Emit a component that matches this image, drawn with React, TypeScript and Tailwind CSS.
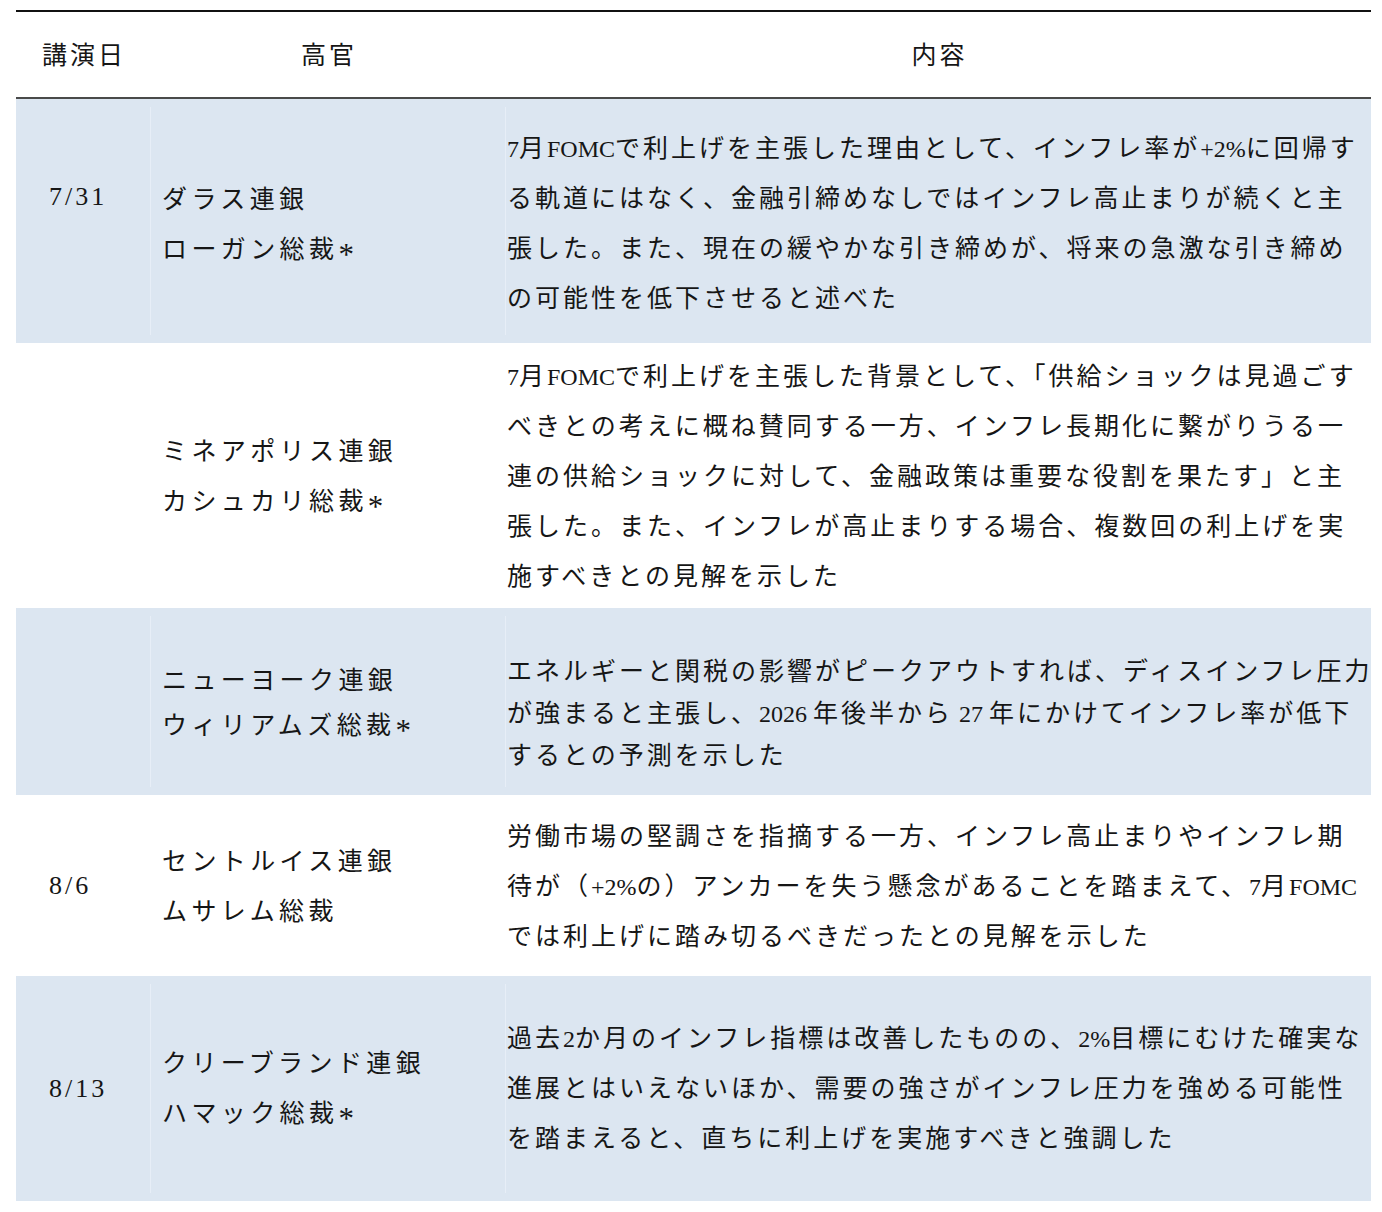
import React from "react";

function T({ s }: { s: string }) {
  const parts = s.split(/([\x20-\x7E]+)/);
  return (
    <>
      {parts.map((p, i) => {
        if (p === "") return null;
        if (p === "*")
          return (
            <span key={i} className="relative top-[7px] text-[31px] leading-none tracking-normal">
              *
            </span>
          );
        if (/^[\x20-\x7E]+$/.test(p))
          return (
            <span key={i} className="text-[24px] tracking-normal">
              {p}
            </span>
          );
        return <React.Fragment key={i}>{p}</React.Fragment>;
      })}
    </>
  );
}

type RowData = {
  date?: string;
  dateTop?: boolean;
  name: string[];
  content: string[];
  rowClass: string;
  lineClass: string;
  nameClass: string;
  contentClass: string;
};

const rows: RowData[] = [
  {
    date: "7/31",
    dateTop: true,
    name: ["ダラス連銀", "ローガン総裁*"],
    content: [
      "7月FOMCで利上げを主張した理由として、インフレ率が+2%に回帰す",
      "る軌道にはなく、金融引締めなしではインフレ高止まりが続くと主",
      "張した。また、現在の緩やかな引き締めが、将来の急激な引き締め",
      "の可能性を低下させると述べた",
    ],
    rowClass: "h-[244px] bg-[#dce6f1]",
    lineClass: "border-[#e7eef7]",
    nameClass: "leading-[50px] pt-[8px]",
    contentClass: "leading-[50px] pt-[6px]",
  },
  {
    name: ["ミネアポリス連銀", "カシュカリ総裁*"],
    content: [
      "7月FOMCで利上げを主張した背景として、「供給ショックは見過ごす",
      "べきとの考えに概ね賛同する一方、インフレ長期化に繋がりうる一",
      "連の供給ショックに対して、金融政策は重要な役割を果たす」と主",
      "張した。また、インフレが高止まりする場合、複数回の利上げを実",
      "施すべきとの見解を示した",
    ],
    rowClass: "h-[265px] bg-white",
    lineClass: "border-transparent",
    nameClass: "leading-[50px] pt-[3px]",
    contentClass: "leading-[50px] pt-[3px]",
  },
  {
    name: ["ニューヨーク連銀", "ウィリアムズ総裁*"],
    content: [
      "エネルギーと関税の影響がピークアウトすれば、ディスインフレ圧力",
      "が強まると主張し、2026 年後半から 27 年にかけてインフレ率が低下",
      "するとの予測を示した",
    ],
    rowClass: "h-[187px] bg-[#dce6f1]",
    lineClass: "border-[#e7eef7]",
    nameClass: "leading-[45px] pt-[2px]",
    contentClass: "leading-[42px] pt-[25px]",
  },
  {
    date: "8/6",
    name: ["セントルイス連銀", "ムサレム総裁"],
    content: [
      "労働市場の堅調さを指摘する一方、インフレ高止まりやインフレ期",
      "待が（+2%の）アンカーを失う懸念があることを踏まえて、7月FOMC",
      "では利上げに踏み切るべきだったとの見解を示した",
    ],
    rowClass: "h-[181px] bg-white",
    lineClass: "border-transparent",
    nameClass: "leading-[50px] pt-[2px]",
    contentClass: "leading-[50px] pt-[2px]",
  },
  {
    date: "8/13",
    name: ["クリーブランド連銀", "ハマック総裁*"],
    content: [
      "過去2か月のインフレ指標は改善したものの、2%目標にむけた確実な",
      "進展とはいえないほか、需要の強さがインフレ圧力を強める可能性",
      "を踏まえると、直ちに利上げを実施すべきと強調した",
    ],
    rowClass: "h-[225px] bg-[#dce6f1]",
    lineClass: "border-[#e7eef7]",
    nameClass: "leading-[50px] pt-[0px]",
    contentClass: "leading-[50px] pt-[1px]",
  },
];

function Row({ r }: { r: RowData }) {
  return (
    <div className={`flex ${r.rowClass}`}>
      <div className="my-2 flex w-[134px] shrink-0 items-center pl-[33px] text-[26px] tracking-[3px]">
        {r.date ? (
          <div className={r.dateTop ? "pb-[48px] leading-[50px]" : "leading-[50px]"}>{r.date}</div>
        ) : null}
      </div>
      <div
        className={`my-2 flex w-[355px] shrink-0 items-center border-l pl-[11px] text-[25px] tracking-[4.4px] whitespace-nowrap ${r.lineClass}`}
      >
        <div className={r.nameClass}>
          {r.name.map((n, i) => (
            <div key={i}>
              <T s={n} />
            </div>
          ))}
        </div>
      </div>
      <div
        className={`my-2 flex flex-1 items-center border-l pl-[1px] text-[25px] tracking-[3px] whitespace-nowrap ${r.lineClass}`}
      >
        <div className={r.contentClass}>
          {r.content.map((c, i) => (
            <div key={i}>
              <T s={c} />
            </div>
          ))}
        </div>
      </div>
    </div>
  );
}

export default function App() {
  return (
    <div className="min-h-[1212px] w-[1382px] bg-white pt-[10px] font-['Liberation_Serif','Noto_Sans_CJK_JP',serif] text-[#161616]">
      <div className="ml-[16px] w-[1355px]">
        <div className="h-[2px] bg-[#111]" />
        <div className="flex h-[87px] items-center border-b-2 border-[#4a4a4a] pt-[3px] text-[25px] tracking-[3px]">
          <div className="w-[134px] shrink-0 pl-[2px] text-center">講演日</div>
          <div className="w-[355px] shrink-0 pl-[3px] text-center">高官</div>
          <div className="flex-1 pl-[3px] text-center">内容</div>
        </div>
        {rows.map((r, i) => (
          <Row key={i} r={r} />
        ))}
      </div>
    </div>
  );
}
